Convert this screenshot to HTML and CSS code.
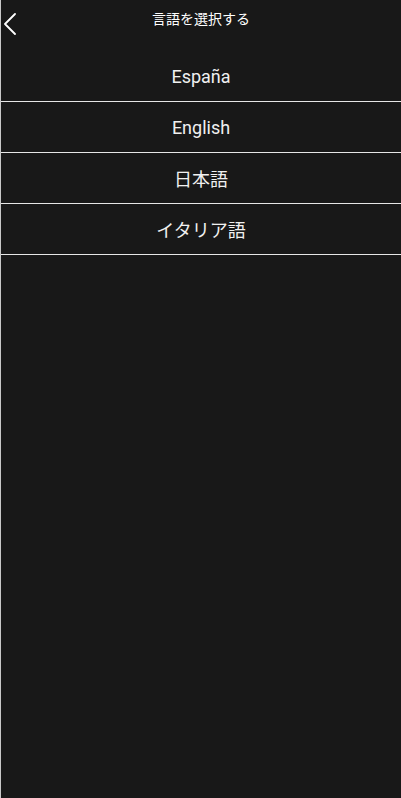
FILE: index.html
```html
<!DOCTYPE html>
<html lang="ja">
<head>
<meta charset="utf-8">
<title>言語を選択する</title>
<link rel="stylesheet" href="styles.css">
</head>
<body>
<div class="page">
  <header class="header">
    <button class="back" aria-label="戻る">
      <svg width="14" height="22" viewBox="0 0 14 22"><polyline points="12,1 2,11 12,21" fill="none" stroke="#fff" stroke-width="1.8" stroke-linecap="round" stroke-linejoin="round"/></svg>
    </button>
    <h1 class="title">言語を選択する</h1>
  </header>
  <ul class="list">
    <li class="item">España</li>
    <li class="item">English</li>
    <li class="item">日本語</li>
    <li class="item">イタリア語</li>
  </ul>
</div>
</body>
</html>
```

FILE: styles.css
```css
html, body {
  margin: 0;
  padding: 0;
  height: 100%;
  background: #181818;
}
body {
  font-family: Roboto, "Noto Sans CJK JP", sans-serif;
  color: #fff;
}
.page {
  min-height: 100%;
  box-sizing: border-box;
  border-left: 1px solid #c8c8c8;
  background: #181818;
}
.header {
  position: relative;
  height: 51px;
  display: flex;
  justify-content: center;
}
.back {
  position: absolute;
  left: 2px;
  top: 13px;
  padding: 0;
  margin: 0;
  border: 0;
  background: none;
  display: flex;
}
.title {
  margin: 0;
  padding-top: 9px;
  font-size: 14px;
  font-weight: normal;
  line-height: 20px;
  color: #fff;
}
.list {
  list-style: none;
  margin: 0;
  padding: 0;
}
.item {
  height: 50px;
  border-bottom: 1px solid #e6e6e6;
  display: flex;
  align-items: center;
  justify-content: center;
  font-size: 18px;
  color: #f0f0f0;
}
```
